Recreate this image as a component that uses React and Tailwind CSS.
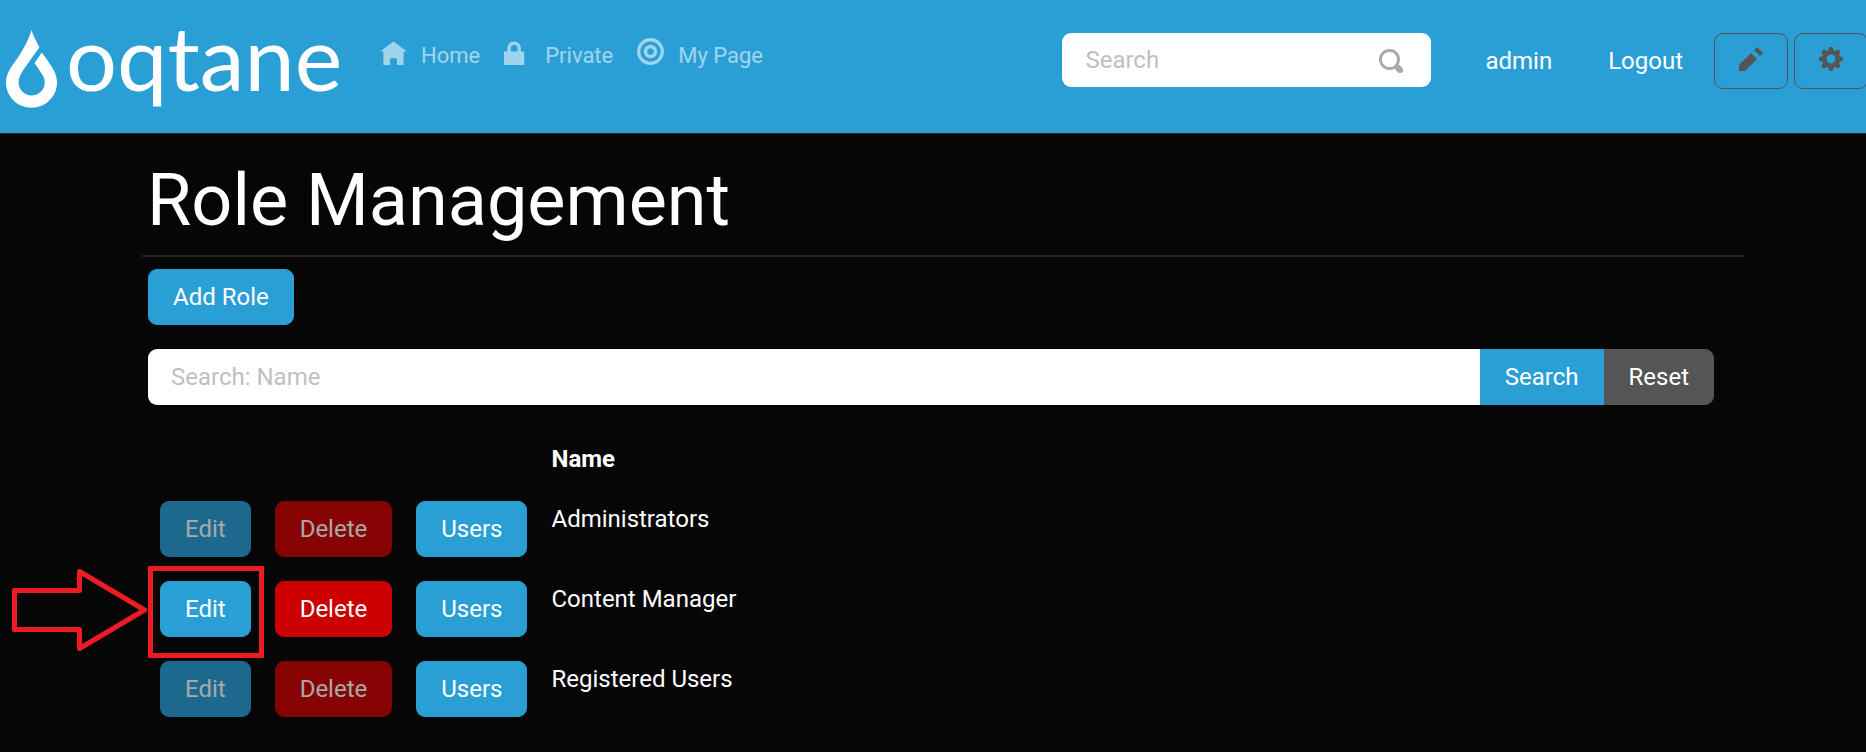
const ICONS = {
  home: "M4 0l-4 3h1v4h2v-2h2v2h2v-4.03l1 .03-4-3z",
  lock: "M3 0c-1.1 0-2 .9-2 2v1h-1v4h6v-4h-1v-1c0-1.1-.9-2-2-2zm0 1c.56 0 1 .44 1 1v1h-2v-1c0-.56.44-1 1-1z",
  target:
    "M4 0c-2.2 0-4 1.8-4 4s1.8 4 4 4 4-1.8 4-4-1.8-4-4-4zm0 1c1.66 0 3 1.34 3 3s-1.34 3-3 3-3-1.34-3-3 1.34-3 3-3zm0 1c-1.1 0-2 .9-2 2s.9 2 2 2 2-.9 2-2-.9-2-2-2zm0 1c.56 0 1 .44 1 1s-.44 1-1 1-1-.44-1-1 .44-1 1-1z",
  pencil: "M6 0l-1 1 2 2 1-1-2-2zm-2 2l-4 4v2h2l4-4-2-2z",
  cog: "M3.5 0l-.5 1.19c-.1.03-.19.08-.28.13l-1.19-.5-.72.72.5 1.19c-.05.1-.09.18-.13.28l-1.19.5v1l1.19.5c.04.1.08.18.13.28l-.5 1.19.72.72 1.19-.5c.09.04.18.09.28.13l.5 1.19h1l.5-1.19c.09-.04.19-.08.28-.13l1.19.5.72-.72-.5-1.19c.04-.09.09-.19.13-.28l1.19-.5v-1l-1.19-.5c-.03-.09-.08-.19-.13-.28l.5-1.19-.72-.72-1.19.5c-.09-.04-.19-.09-.28-.13l-.5-1.19h-1zm.5 2.5c.83 0 1.5.67 1.5 1.5s-.67 1.5-1.5 1.5-1.5-.67-1.5-1.5.67-1.5 1.5-1.5z",
  search:
    "M3.5 0c-1.93 0-3.5 1.57-3.5 3.5s1.57 3.5 3.5 3.5c.59 0 1.17-.14 1.66-.41a1 1 0 0 0 .13.13l1 1a1.02 1.02 0 1 0 1.44-1.44l-1-1a1 1 0 0 0-.16-.13c.27-.49.44-1.06.44-1.66 0-1.93-1.55-3.5-3.5-3.5zm0 1c1.39 0 2.5 1.11 2.5 2.5 0 .66-.24 1.27-.66 1.72-.01.01-.02.02-.03.03a1 1 0 0 0-.13.13c-.44.4-1.04.63-1.69.63-1.39 0-2.5-1.11-2.5-2.5s1.11-2.5 2.5-2.5z",
};

function Icon({ name, viewBox = "0 0 8 8", className }) {
  return (
    <svg viewBox={viewBox} className={className} fill="currentColor" aria-hidden="true">
      <path d={ICONS[name]} />
    </svg>
  );
}

const VARIANTS = {
  primary: "border-[#2a9fd6] bg-[#2a9fd6]",
  danger: "border-[#cc0000] bg-[#cc0000]",
  secondary: "border-[#555555] bg-[#555555]",
  plain: "border-transparent",
  outline: "border-[#555555] text-[#555555]",
};

function Button({ variant = "primary", shape = "rounded-[9px]", children, ...rest }) {
  return (
    <button
      type="button"
      className={`h-14 shrink-0 border px-6 leading-9 whitespace-nowrap disabled:opacity-65 ${shape} ${VARIANTS[variant]}`}
      {...rest}
    >
      {children}
    </button>
  );
}

function Logo() {
  return (
    <a href="#" className="flex w-[380px] shrink-0 items-start pl-[5px]">
      <svg viewBox="15 87 160 240" className="mt-[29px] h-20 w-[53px]" aria-hidden="true">
        <path
          fill="#fff"
          d="M95 90C100 106 109 124 119 141L70 210C60 225 56 236 56 248C56 270 74 287 95 287C117 287 135 270 135 248C135 236 131 228 124 218L104 189L126 157C138 172 150 190 160 207C168 220 172 235 172 248C172 290 138 324 95 324C52 324 18 290 18 248C18 230 24 216 34 201C58 168 84 128 95 90Z"
        />
      </svg>
      <span className="mt-0.5 ml-2 font-[Lato,sans-serif] text-[90px] leading-[108px]">oqtane</span>
    </a>
  );
}

const NAV = [
  { label: "Home", icon: "home", viewBox: "0 -1 8 8" },
  { label: "Private", icon: "lock", viewBox: "0 -1 8 8" },
  { label: "My Page", icon: "target", viewBox: "0 0 8 8" },
];

const ROLES = [
  { name: "Administrators", locked: true },
  { name: "Content Manager", locked: false, highlighted: true },
  { name: "Registered Users", locked: true },
];

function Callout() {
  return (
    <>
      <span className="pointer-events-none absolute -top-[3px] left-0 h-[92px] w-[116px] border-[5px] border-[#ed1c24]" />
      <svg
        viewBox="0 0 136 84"
        className="pointer-events-none absolute -top-[1px] right-full h-[84px] w-[136px]"
        fill="none"
        stroke="#ed1c24"
        strokeWidth="5"
        strokeLinejoin="round"
        aria-hidden="true"
      >
        <path d="M2.5 22.500H67.500V3.500L132.500 42L67.500 80.500V61.500H2.500Z" />
      </svg>
    </>
  );
}

export default function App() {
  return (
    <div className="min-h-screen overflow-hidden bg-[#060606] font-[Roboto,sans-serif] text-2xl leading-9 text-white">
      <header className="flex h-[134px] items-start border-b border-[#282828] bg-[#2a9fd6]">
        <Logo />
        <nav className="flex gap-6 pt-[38px] text-[22px]">
          {NAV.map((item) => (
            <a key={item.label} href="#" className="flex items-start gap-3.5 text-white/55">
              <Icon name={item.icon} viewBox={item.viewBox} className="size-[27px]" />
              {item.label}
            </a>
          ))}
        </nav>
        <div className="-mr-0.5 ml-auto flex gap-1.5 pt-[33px]">
          <form className="relative mr-[23px] w-[369px]" onSubmit={(e) => e.preventDefault()}>
            <input
              type="search"
              aria-label="Search"
              placeholder="Search"
              className="h-[54px] w-full rounded-[9px] bg-white pr-16 pl-[23px] text-[#222222] placeholder:text-[#bfbfbf]"
            />
            <button type="submit" aria-label="Submit search" className="absolute top-4 right-7 text-[#aaaaaa]">
              <Icon name="search" className="size-6" />
            </button>
          </form>
          <Button variant="plain">admin</Button>
          <Button variant="plain">Logout</Button>
          <Button variant="outline" aria-label="Edit page">
            <Icon name="pencil" className="mb-1 size-6" />
          </Button>
          <Button variant="outline" aria-label="Settings">
            <Icon name="cog" className="mb-1 size-6" />
          </Button>
        </div>
      </header>

      <main className="pt-6 pr-[122px] pl-[142px]">
        <h1 className="pl-[5px] text-7xl leading-[86px]">Role Management</h1>
        <hr className="mt-[11px] border-t-2 border-[#242424]" />
        <div className="mt-3 pr-[30px] pl-1.5">
          <Button>Add Role</Button>
          <form className="mt-6 flex" onSubmit={(e) => e.preventDefault()}>
            <input
              type="text"
              aria-label="Search: Name"
              placeholder="Search: Name"
              className="h-14 min-w-0 flex-1 rounded-l-[9px] bg-white px-[23px] text-[#222222] placeholder:text-[#bfbfbf]"
            />
            <Button shape="rounded-none">Search</Button>
            <Button variant="secondary" shape="rounded-r-[9px]">
              Reset
            </Button>
          </form>
          <table className="mt-6 w-full text-left">
            <thead>
              <tr>
                <th className="w-px p-3" />
                <th className="w-px p-3" />
                <th className="w-px p-3" />
                <th className="p-3 font-bold">Name</th>
              </tr>
            </thead>
            <tbody>
              {ROLES.map((role) => (
                <tr key={role.name} className="h-20 align-top">
                  <td className="relative p-3">
                    <Button disabled={role.locked}>Edit</Button>
                    {role.highlighted && <Callout />}
                  </td>
                  <td className="p-3">
                    <Button variant="danger" disabled={role.locked}>
                      Delete
                    </Button>
                  </td>
                  <td className="p-3">
                    <Button>Users</Button>
                  </td>
                  <td className="p-3">{role.name}</td>
                </tr>
              ))}
            </tbody>
          </table>
        </div>
      </main>
    </div>
  );
}
